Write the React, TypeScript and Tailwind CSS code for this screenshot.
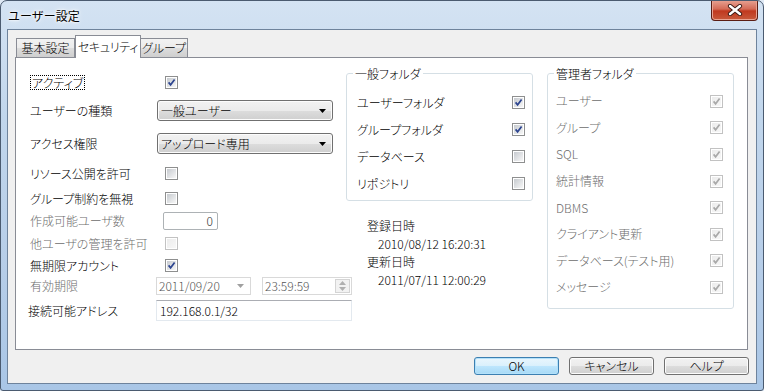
import React, { useId } from "react";

function Cb({ checked = false, disabled = false }: { checked?: boolean; disabled?: boolean }) {
  const id = "g" + useId().replace(/[^a-zA-Z0-9]/g, "");
  return (
    <svg width="13" height="13" viewBox="0 0 13 13" className="block shrink-0">
      <defs>
        <linearGradient id={id} x1="0" y1="0" x2="1" y2="1">
          <stop offset="0" stopColor={disabled ? "#ececec" : "#c6cacf"} />
          <stop offset="1" stopColor={disabled ? "#f7f7f7" : "#f7f7f7"} />
        </linearGradient>
      </defs>
      <rect x="0.5" y="0.5" width="12" height="12" fill="#fff" stroke={disabled ? "#c2c2c2" : "#8e8f8f"} />
      <rect x="2" y="2" width="9" height="9" fill={`url(#${id})`} />
      {checked && (
        <polyline
          points="3.6,6.4 5.6,8.8 9.6,3.6"
          fill="none"
          stroke={disabled ? "#a9a9a9" : "#2d4590"}
          strokeWidth="1.7"
        />
      )}
    </svg>
  );
}

function Tri({ c = "#000" }: { c?: string }) {
  return (
    <svg width="7" height="4" viewBox="0 0 7 4" className="block">
      <path d="M0 0H7L3.5 4Z" fill={c} />
    </svg>
  );
}

function Combo({ text }: { text: string }) {
  return (
    <div className="w-[176px] h-[21px] shrink-0 rounded-[3px] border border-[#707070] bg-[linear-gradient(#f2f2f2,#ebebeb_50%,#dddddd_50%,#cfcfcf)] shadow-[inset_0_0_0_1px_#fcfcfc] flex items-center justify-between pl-[3px] pr-[6px]">
      <span className="leading-[14px]">{text}</span>
      <Tri />
    </div>
  );
}

function Label({ children, disabled = false }: { children: React.ReactNode; disabled?: boolean }) {
  return (
    <div className={disabled ? "w-[127px] shrink-0 text-[#6d6d6d]" : "w-[127px] shrink-0 text-black"}>
      {children}
    </div>
  );
}

function Item({ label, checked, disabled = false }: { label: string; checked: boolean; disabled?: boolean }) {
  return (
    <div className="flex items-center justify-between">
      <span className={disabled ? "text-[#6d6d6d]" : "text-black"}>{label}</span>
      <Cb checked={checked} disabled={disabled} />
    </div>
  );
}

function Btn({ children, primary = false }: { children: React.ReactNode; primary?: boolean }) {
  return (
    <div
      className={
        primary
          ? "w-[85px] h-[18px] rounded-[3px] border border-[#3c7fb1] bg-[linear-gradient(#eaf6fd,#d9f0fc_50%,#bee6fd_50%,#a7d9f5)] shadow-[inset_0_0_0_1px_#b3e1fa] flex items-center justify-center"
          : "w-[85px] h-[18px] rounded-[3px] border border-[#707070] bg-[linear-gradient(#f2f2f2,#ebebeb_50%,#dddddd_50%,#cfcfcf)] shadow-[inset_0_0_0_1px_#fcfcfc] flex items-center justify-center"
      }
    >
      {children}
    </div>
  );
}

export default function App() {
  return (
    <div className="w-[764px] h-[391px] bg-[#dfe9f5] font-['Noto_Sans_CJK_JP','Noto_Sans',sans-serif] font-light [font-feature-settings:'palt'] text-[12px] leading-[14px] text-black">
      <div className="w-full h-full rounded-t-[7px] rounded-b-[3px] border border-[#4b5b70] bg-[linear-gradient(180deg,#d4e3f3,#c1d6ec_30%,#b6cde8_70%,#a9c6e6)] flex flex-col overflow-hidden">
        {/* title bar */}
        <div className="h-[28px] shrink-0 flex items-start justify-between">
          <div className="pl-[7px] pt-[8px] text-[12px] leading-[14px] font-normal [font-feature-settings:normal] [text-shadow:0_0_6px_#fff,0_0_3px_#fff,0_0_2px_#fff]">
            ユーザー設定
          </div>
          <div className="-mt-px mr-[5px] w-[47px] h-[21px] rounded-b-[4px] border border-t-0 border-[#5a1d14] bg-[linear-gradient(#e8a495,#d46b57_45%,#c0391f_55%,#c85a3c)] shadow-[inset_0_0_0_1px_#e9a392] flex items-center justify-center">
            <svg width="16" height="12" viewBox="0 0 16 12">
              <path d="M3 2L13 10M13 2L3 10" stroke="#3b1a15" strokeWidth="4.2" strokeLinecap="round" />
              <path d="M3 2L13 10M13 2L3 10" stroke="#ffffff" strokeWidth="2.4" strokeLinecap="round" />
            </svg>
          </div>
        </div>

        {/* client area */}
        <div className="flex-1 mx-[6px] mb-[6px] border border-[#6e839c] bg-[#f0f0f0] flex flex-col">
          {/* tabs */}
          <div className="pt-[5px] pl-[8px] h-[27px] flex items-end shrink-0">
            <div className="w-[59px] h-[19px] border border-b-0 border-[#898c95] bg-[linear-gradient(#f2f2f2,#ebebeb_50%,#dddddd_50%,#cfcfcf)] flex items-center justify-center">
              基本設定
            </div>
            <div className="relative z-10 -mb-px w-[66px] h-[23px] border border-b-0 border-[#898c95] bg-white flex items-start justify-center pt-[4px] tracking-[-0.3px]">
              セキュリティ
            </div>
            <div className="w-[47px] h-[19px] border border-b-0 border-l-0 border-[#898c95] bg-[linear-gradient(#f2f2f2,#ebebeb_50%,#dddddd_50%,#cfcfcf)] flex items-center justify-center">
              グループ
            </div>
          </div>

          {/* panel */}
          <div className="ml-[7px] mr-[8px] h-[293px] shrink-0 border border-[#898c95] bg-white flex pl-[14px]">
            {/* left column */}
            <div className="w-[316px] shrink-0 flex flex-col pt-[16px]">
              <div className="h-[17px] flex items-center">
                <Label>
                  <span className="inline-block border border-dotted border-black px-[1px] leading-[13px]">アクティブ</span>
                </Label>
                <div className="ml-[8px]">
                  <Cb checked />
                </div>
              </div>
              <div className="mt-[9px] h-[21px] flex items-center">
                <Label>ユーザーの種類</Label>
                <Combo text="一般ユーザー" />
              </div>
              <div className="mt-[12px] h-[21px] flex items-center">
                <Label>アクセス権限</Label>
                <Combo text="アップロード専用" />
              </div>
              <div className="mt-[11px] h-[17px] flex items-center">
                <Label>リソース公開を許可</Label>
                <div className="ml-[8px]">
                  <Cb />
                </div>
              </div>
              <div className="mt-[8px] h-[17px] flex items-center">
                <Label>グループ制約を無視</Label>
                <div className="ml-[8px]">
                  <Cb />
                </div>
              </div>
              <div className="mt-[5px] h-[18px] flex items-center">
                <Label disabled>作成可能ユーザ数</Label>
                <div className="ml-[6px] w-[55px] h-[18px] shrink-0 rounded-[2px] border border-[#adb2b5] bg-white flex items-center justify-end pr-[4px] text-[#333]">
                  0
                </div>
              </div>
              <div className="mt-[5px] h-[17px] flex items-center">
                <Label disabled>他ユーザの管理を許可</Label>
                <div className="ml-[8px]">
                  <Cb disabled />
                </div>
              </div>
              <div className="mt-[5px] h-[17px] flex items-center">
                <Label>無期限アカウント</Label>
                <div className="ml-[8px]">
                  <Cb checked />
                </div>
              </div>
              <div className="mt-[3px] h-[18px] flex items-center">
                <Label disabled>有効期限</Label>
                <div className="-ml-px w-[95px] h-[18px] shrink-0 border border-[#d9d9d9] bg-white flex items-center justify-between pl-[2px] pr-[6px] text-[#555]">
                  <span>2011/09/20</span>
                  <Tri c="#a0a0a0" />
                </div>
                <div className="ml-[11px] w-[90px] h-[18px] shrink-0 border border-[#d9d9d9] bg-white flex items-center justify-between pl-[2px] pr-px text-[#555]">
                  <span>23:59:59</span>
                  <div className="w-[15px] h-[14px] border border-[#d4d4d4] bg-[#f2f2f2] flex flex-col items-center justify-center gap-[2px]">
                    <svg width="7" height="4" viewBox="0 0 7 4" className="block">
                      <path d="M0 4H7L3.5 0Z" fill="#b0b0b0" />
                    </svg>
                    <svg width="7" height="4" viewBox="0 0 7 4" className="block">
                      <path d="M0 0H7L3.5 4Z" fill="#b0b0b0" />
                    </svg>
                  </div>
                </div>
              </div>
              <div className="mt-[5px] h-[21px] flex items-center">
                <div className="w-[126px] shrink-0 -ml-[2px] mr-[2px]">接続可能アドレス</div>
                <div className="w-[196px] h-[21px] shrink-0 border border-[#e3e9ef] border-t-[#abadb3] bg-white flex items-center pl-[3px]">
                  192.168.0.1/32
                </div>
              </div>
            </div>

            {/* middle column */}
            <div className="w-[187px] shrink-0 flex flex-col pt-[15px]">
              <div className="h-[128px] border border-[#d5dfe5] rounded-[3px] flex flex-col pl-[10px] pr-[7px]">
                <div className="-mt-[7px] -ml-[4px] w-fit bg-white px-[2px] leading-[14px]">一般フォルダ</div>
                <div className="mt-[8px] flex flex-col">
                  <div className="h-[27px] flex flex-col justify-center">
                    <Item label="ユーザーフォルダ" checked />
                  </div>
                  <div className="h-[27px] flex flex-col justify-center">
                    <Item label="グループフォルダ" checked />
                  </div>
                  <div className="h-[27px] flex flex-col justify-center">
                    <Item label="データベース" checked={false} />
                  </div>
                  <div className="h-[27px] flex flex-col justify-center">
                    <Item label="リポジトリ" checked={false} />
                  </div>
                </div>
              </div>
              <div className="mt-[16px] flex flex-col pl-[21px] leading-[18px]">
                <div>登録日時</div>
                <div className="pl-[11px]">2010/08/12 16:20:31</div>
                <div>更新日時</div>
                <div className="pl-[11px]">2011/07/11 12:00:29</div>
              </div>
            </div>

            {/* right column */}
            <div className="ml-[14px] w-[187px] shrink-0 flex flex-col pt-[15px]">
              <div className="h-[236px] border border-[#d5dfe5] rounded-[3px] flex flex-col pl-[8px] pr-[10px]">
                <div className="-mt-[7px] -ml-[2px] w-fit bg-white px-[2px] leading-[14px]">管理者フォルダ</div>
                <div className="mt-[7px] flex flex-col">
                  {["ユーザー", "グループ", "SQL", "統計情報", "DBMS", "クライアント更新", "データベース(テスト用)", "メッセージ"].map((t) => (
                    <div key={t} className="h-[26.6px] flex flex-col justify-center">
                      <Item label={t} checked disabled />
                    </div>
                  ))}
                </div>
              </div>
            </div>
          </div>

          {/* buttons */}
          <div className="mt-[7px] pr-[7px] flex justify-end gap-[10px]">
            <Btn primary>OK</Btn>
            <Btn>キャンセル</Btn>
            <Btn>ヘルプ</Btn>
          </div>
        </div>
      </div>
    </div>
  );
}
